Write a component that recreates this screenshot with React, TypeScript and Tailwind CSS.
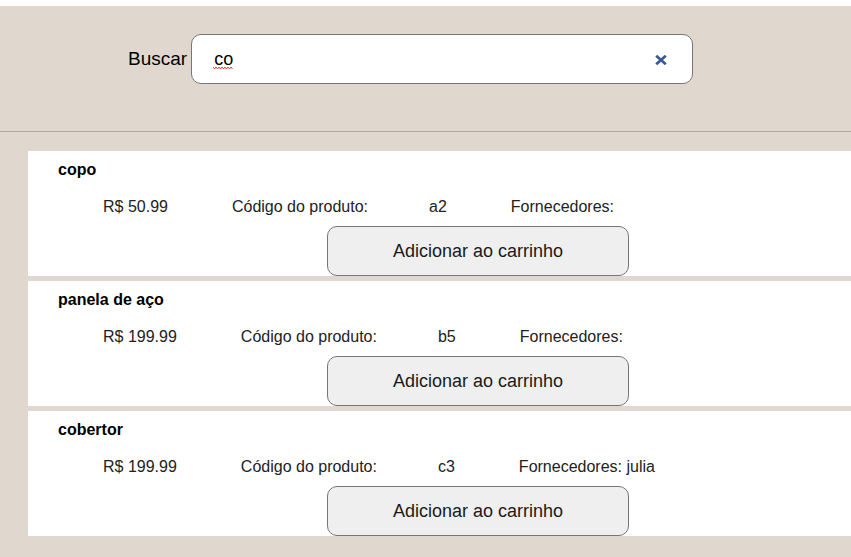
import { useState } from 'react';

type Produto = {
  nome: string;
  preco: string;
  codigo: string;
  fornecedores: string;
};

const produtos: Produto[] = [
  { nome: 'copo', preco: 'R$ 50.99', codigo: 'a2', fornecedores: '' },
  { nome: 'panela de aço', preco: 'R$ 199.99', codigo: 'b5', fornecedores: '' },
  { nome: 'cobertor', preco: 'R$ 199.99', codigo: 'c3', fornecedores: 'julia' },
];

function ProdutoCard({ produto }: { produto: Produto }) {
  return (
    <div className="ml-[28px] h-[125px] bg-white pt-[10px] flex flex-col">
      <p className="pl-[30px] text-[16px] leading-[18px] font-bold text-black">{produto.nome}</p>
      <div className="mt-[19px] pl-[75px] flex gap-16 text-[16px] leading-[18px] text-[#222]">
        <span>{produto.preco}</span>
        <span className="-mr-[3px]">Código do produto:</span>
        <span>{produto.codigo}</span>
        <span>Fornecedores: {produto.fornecedores}</span>
      </div>
      <button className="mt-[10px] ml-[299px] w-[302px] h-[50px] shrink-0 rounded-[10px] border border-[#767676] bg-[#efefef] text-[18px] text-[#1a1a1a]">
        Adicionar ao carrinho
      </button>
    </div>
  );
}

export default function App() {
  const [busca, setBusca] = useState('co');

  return (
    <div className="min-h-[557px] bg-white pt-[6px] font-['Liberation_Sans',Arial,sans-serif]">
      <div className="min-h-[551px] bg-[#e0d8cf] pb-[21px]">
        <header className="h-[126px] pt-[28px] pl-[128px] flex items-start border-b border-[#a4a9ae]">
          <div className="flex items-center gap-[4px]">
            <label className="text-[19px] text-black">Buscar</label>
            <div className="relative">
              <input
                value={busca}
                onChange={(e) => setBusca(e.target.value)}
                spellCheck={false}
                className="w-[502px] h-[50px] rounded-[10px] border border-[#767676] bg-white pl-[22px] pr-10 text-[18px] text-black outline-none"
              />
              {busca === 'co' && (
                <svg className="absolute left-[22px] top-[32px]" width="20" height="4" viewBox="0 0 20 4">
                  <path d="M0 1 L1.5 3 L3 1 L4.5 3 L6 1 L7.5 3 L9 1 L10.5 3 L12 1 L13.5 3 L15 1 L16.5 3 L18 1 L19.5 3" stroke="#e0302a" strokeWidth="0.9" fill="none" />
                </svg>
              )}
              <button
                onClick={() => setBusca('')}
                className="absolute left-[464px] top-[21px] text-[#3a5a9a]"
              >
                <svg width="12" height="10" viewBox="0 0 12 10" className="block">
                  <path d="M1.2 0.8 L10.8 9.2 M10.8 0.8 L1.2 9.2" stroke="currentColor" strokeWidth="2.8" />
                </svg>
              </button>
            </div>
          </div>
        </header>

        <div className="pt-[19px] flex flex-col gap-[5px]">
          {produtos.map((p) => (
            <ProdutoCard key={p.codigo} produto={p} />
          ))}
        </div>
      </div>
    </div>
  );
}
